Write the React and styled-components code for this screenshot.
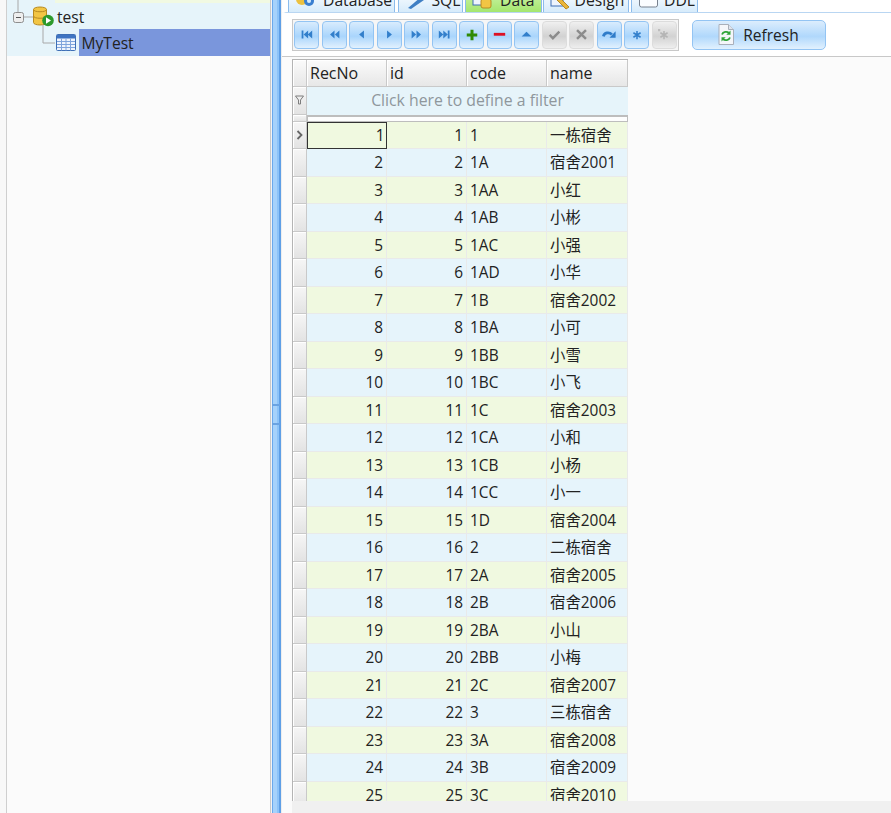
import * as React from "react";
import styled, { createGlobalStyle } from "styled-components";

const GlobalStyle = createGlobalStyle`
  html, body {
    margin: 0;
    padding: 0;
    background: #fbfbfb;
  }
  * {
    box-sizing: border-box;
  }
`;

const FONT = `"Open Sans", "Noto Sans", "Noto Sans CJK SC", sans-serif`;

const Page = styled.div`
  display: grid;
  grid-template-columns: 270px 12px 1fr;
  width: 891px;
  height: 813px;
  overflow: hidden;
  font-family: ${FONT};
  font-size: 15px;
  color: #222;
  background: #fbfbfb;
`;

/* left pane */
const LeftPane = styled.div`
  padding-left: 6px;
  background: #f8f8f8;
`;

const Tree = styled.div`
  height: 100%;
  border-left: 1.5px solid #cfcfcf;
  background: #fbfbfb;
  font-size: 15.6px;
`;

const TreeTop = styled.div`
  background: #e6f4fa;
`;

const TreeStub = styled.div`
  display: flex;
  height: 3px;
`;

const Stripe = styled.div`
  flex: 1;
  background: #f1f9e2;
`;

const TreeRow = styled.div`
  display: flex;
  align-items: center;
  height: ${p => p.$h}px;
`;

const NodeLabel = styled.span`
  margin-left: ${p => p.$ml || 0}px;
  padding-top: ${p => p.$pt || 0}px;
  line-height: 1;
`;

const Selected = styled.div`
  flex: 1;
  align-self: stretch;
  display: flex;
  align-items: center;
  margin-left: 3px;
  padding-left: 3px;
  background: #7a96dc;
`;

const Lines = styled.svg`
  flex: none;
  overflow: visible;
`;

/* splitter */
const Splitter = styled.div`
  display: flex;
  flex-direction: column;
  gap: 17px;
  padding-top: 404px;
  border-left: 1.5px solid #c9c9c9;
  border-right: 1.5px solid #ededed;
  background: linear-gradient(
    to right,
    #f4f4f4 0 1px,
    #6aa9ec 1px 2px,
    #a6d2fb 2px 6px,
    #8cc3f8 6px 8px,
    #5f9fe6 8px 9px
  );
`;

const Grip = styled.div`
  height: 2px;
  margin: 0 1px;
  background: #6aa3e2;
`;

/* right pane */
const RightPane = styled.div`
  display: flex;
  flex-direction: column;
  min-width: 0;
  height: 813px;
`;

const TabBar = styled.div`
  display: flex;
  align-items: flex-end;
  gap: 2.5px;
  flex: none;
  height: 12px;
  padding-left: 6px;
  overflow: hidden;
  background: #fff;
`;

const Tab = styled.div`
  display: flex;
  flex: none;
  align-items: center;
  gap: ${p => p.$gap}px;
  width: ${p => p.$w}px;
  height: 24px;
  margin-right: ${p => (p.$active ? -2 : 0)}px;
  padding-left: 6px;
  border: 1px solid #8cbcec;
  border-bottom: none;
  background: ${p =>
    p.$active
      ? "linear-gradient(#d2f5b0, #a4e66e)"
      : "linear-gradient(#ffffff, #d6ebfb)"};
  font-size: 15.7px;
  line-height: 1;
  white-space: nowrap;
`;

const Content = styled.div`
  flex: 1;
  display: flex;
  flex-direction: column;
  min-height: 0;
  border-top: 1px solid #b9d6f2;
  border-top-left-radius: 5px;
  background: #fbfbfb;
`;

const ToolArea = styled.div`
  display: flex;
  align-items: center;
  gap: 13px;
  flex: none;
  height: 44px;
  padding: 0 0 0 10px;
  border-bottom: 1.5px solid #c8c8c8;
  background: #fff;
`;

const Toolbar = styled.div`
  display: flex;
  gap: 2.5px;
  height: 32px;
  padding: 1px;
  border: 1.5px solid #c8c8c8;
  background: #f6f6f6;
`;

const ToolButton = styled.div`
  display: flex;
  align-items: center;
  justify-content: center;
  width: 25px;
  height: 28px;
  border-radius: 4px;
  border: 1px solid ${p => (p.$off ? "#dcdcdc" : "#93c4f3")};
  background: ${p =>
    p.$off
      ? "linear-gradient(#f0f0f0, #d2d2d2 55%, #eeeeee)"
      : "linear-gradient(#d9ecfd, #a9d5fc 55%, #e2f1fe)"};
`;

const RefreshButton = styled.div`
  display: flex;
  align-items: center;
  justify-content: center;
  gap: 9px;
  width: 134px;
  height: 30px;
  border-radius: 5px;
  border: 1px solid #93c4f3;
  background: linear-gradient(#dcedfd, #b0d8fc 55%, #e2f1fe);
  font-size: 15.5px;
`;

const GridArea = styled.div`
  flex: 1;
  min-height: 0;
  padding: 2px 0 0 10px;
  overflow: hidden;
`;

const BottomBar = styled.div`
  flex: none;
  height: 12px;
  margin-left: 10px;
  background: #f0f0f0;
`;

const Table = styled.div`
  width: 336px;
  border-left: 1.5px solid #b4b4b4;
  border-top: 1.5px solid #b4b4b4;
`;

const columns = "14px 80px 80px 80px 80.5px";

const HeadRow = styled.div`
  display: grid;
  grid-template-columns: ${columns};
  height: 26.5px;
`;

const HeadCell = styled.div`
  display: flex;
  align-items: center;
  padding-left: 3px;
  border-right: 1.5px solid #c9c9c9;
  border-bottom: 1px solid #c9c9c9;
  background: linear-gradient(#fbfbfb, #e7e7e7);
  box-shadow: inset 1px 1px 0 #fff;
  font-size: 16px;
  line-height: 1;
`;

const FilterRow = styled.div`
  display: grid;
  grid-template-columns: 14px 1fr;
  height: 28px;
`;

const FilterText = styled.div`
  display: flex;
  align-items: center;
  justify-content: center;
  background: #e6f4fa;
  color: #8f979c;
  font-size: 15.8px;
  line-height: 1;
`;

const Gutter = styled.div`
  display: flex;
  align-items: center;
  justify-content: center;
  border-right: 1px solid #c9c9c9;
  border-bottom: 1.5px solid #c9c9c9;
  background: linear-gradient(#f6f6f6, #e3e3e3);
  box-shadow: inset 1px 1px 0 #fff;
`;

const SplitRow = styled.div`
  display: grid;
  grid-template-columns: 14px 1fr;
  height: 7px;
`;

const SplitBar = styled.div`
  margin-right: 0.5px;
  border: 1px solid #bdbdbd;
  border-top-width: 2px;
  background: #fdfdfd;
`;

const Row = styled.div`
  display: grid;
  grid-template-columns: ${columns};
  height: 27.5px;
  background: ${p => (p.$odd ? "#f0f9e0" : "#e6f4fb")};
`;

const Cell = styled.div`
  display: flex;
  align-items: center;
  justify-content: ${p => (p.$right ? "flex-end" : "flex-start")};
  padding: 1px 3px 0;
  border-right: 1.5px solid #e9eaea;
  border-bottom: 1.5px solid #e9eaea;
  font-size: 15.4px;
  white-space: nowrap;
  line-height: 1;
`;

const CurrentCell = styled(Cell)`
  padding-right: 1.5px;
  border: 1.5px solid #333;
`;

const navPaths = {
  first: "M2 3h2.2v10H2zM10 3v10L4.5 8zM15 3v10L9.5 8z",
  prevPage: "M8 3v10L2.5 8zM14 3v10L8.5 8z",
  prev: "M11 3v10L5 8z",
  next: "M5 3v10l6-5z",
  nextPage: "M2 3v10l5.5-5zM8 3v10l5.5-5z",
  last: "M1 3v10l5.5-5zM6.5 3v10L12 8zM12 3h2.2v10H12z",
  up: "M8 4.5l6 6H2z"
};

const NavIcon = ({ kind }) => (
  <svg width="13" height="13" viewBox="0 0 16 16">
    <path d={navPaths[kind]} fill="#327fcb" />
  </svg>
);

const PlusIcon = () => (
  <svg width="12" height="12" viewBox="0 0 16 16">
    <path d="M6 1h4v5h5v4h-5v5H6v-5H1V6h5z" fill="#2f8a05" />
  </svg>
);

const MinusIcon = () => (
  <svg width="13" height="13" viewBox="0 0 16 16">
    <path d="M1 6h14v3.5H1z" fill="#dd1124" />
  </svg>
);

const CheckIcon = () => (
  <svg width="13" height="13" viewBox="0 0 16 16">
    <path d="M2 8.5l4 4 8-8" fill="none" stroke="#8c8c8c" strokeWidth="3" />
  </svg>
);

const CrossIcon = () => (
  <svg width="13" height="13" viewBox="0 0 16 16">
    <path d="M2.5 2.5l11 11M13.5 2.5l-11 11" fill="none" stroke="#8c8c8c" strokeWidth="3" />
  </svg>
);

const RedoIcon = () => (
  <svg width="15" height="15" viewBox="0 0 16 16">
    <path d="M1.5 10c1-4 6-5 9-2" fill="none" stroke="#2f7cc9" strokeWidth="3" />
    <path d="M14.5 4.5v7h-6.5z" fill="#2f7cc9" />
  </svg>
);

const StarIcon = ({ color = "#327fcb", faded }) => (
  <svg width="12" height="12" viewBox="0 0 16 16">
    <path
      d="M8 2.5v11M3.2 5l9.6 6M12.8 5l-9.6 6"
      fill="none"
      stroke={color}
      strokeWidth="2"
    />
    {faded && <path d="M0 0h3v3H0z" fill="#bdbdbd" />}
  </svg>
);

const RefreshIcon = () => (
  <svg width="16" height="21" viewBox="0 0 16 21">
    <path d="M1 .5h9.5l5 5v15H1z" fill="#f4f6fa" stroke="#a9afba" />
    <path d="M10.5.5v5h5" fill="#dfe4ec" stroke="#a9afba" />
    <path d="M4 10.5c1-3 5-3.5 7-1.5" fill="none" stroke="#2fa53a" strokeWidth="1.8" />
    <path d="M12.5 6.5v4.2H8.3z" fill="#2fa53a" />
    <path d="M12 13.5c-1 3-5 3.5-7 1.5" fill="none" stroke="#2fa53a" strokeWidth="1.8" />
    <path d="M3.5 17.5v-4.2h4.2z" fill="#2fa53a" />
  </svg>
);

const DbIcon = () => (
  <svg width="21" height="21" viewBox="0 0 21 21">
    <path
      d="M.5 3.5C.5 .2 13.5 .2 13.5 3.5v13c0 3.3-13 3.3-13 0z"
      fill="#f2c544"
      stroke="#b78a22"
    />
    <path d="M.5 3.5c0 3 13 3 13 0M.5 10c0 3 13 3 13 0" fill="none" stroke="#b78a22" />
    <circle cx="15" cy="14.5" r="5.8" fill="#2c9a2c" />
    <path d="M13 11.3l5 3.2-5 3.2z" fill="#fff" />
  </svg>
);

const TableIcon = () => (
  <svg width="20" height="17" viewBox="0 0 20 17">
    <rect x=".5" y=".5" width="19" height="16" rx="1" fill="#eef4fd" stroke="#3e6fb5" />
    <rect x="1" y="1" width="18" height="3.5" fill="#3f74c2" />
    <path
      d="M1 7.5h18M1 10.5h18M1 13.5h18M5.5 4.5v12M10 4.5v12M14.5 4.5v12"
      fill="none"
      stroke="#7fa4dc"
    />
  </svg>
);

const tabClips = {
  database: (
    <svg width="22" height="26" viewBox="0 0 22 26">
      <ellipse cx="7" cy="11" rx="6" ry="6" fill="#ecc13f" />
      <circle cx="14" cy="13" r="5" fill="#3a7fd0" />
      <circle cx="14" cy="13" r="2" fill="#d8ecfb" />
    </svg>
  ),
  sql: (
    <svg width="22" height="26" viewBox="0 0 22 26">
      <path d="M3 20L16 9l3 3-13 9z" fill="#3f7fc4" />
    </svg>
  ),
  data: (
    <svg width="22" height="26" viewBox="0 0 22 26">
      <rect x="1" y="6" width="12" height="11" fill="#eef4fd" stroke="#3e6fb5" />
      <rect x="9" y="11" width="10" height="9" rx="2" fill="#f2c544" stroke="#b78a22" />
    </svg>
  ),
  design: (
    <svg width="22" height="26" viewBox="0 0 22 26">
      <rect x="1" y="6" width="12" height="12" fill="#eef4fd" stroke="#3e6fb5" />
      <path d="M9 9l10 10-3 2-9-9z" fill="#eab53a" stroke="#b78a22" />
    </svg>
  ),
  ddl: (
    <svg width="22" height="26" viewBox="0 0 22 26">
      <rect x="1.5" y="4" width="18" height="15" rx="2" fill="#fbfdff" stroke="#77818e" />
    </svg>
  )
};

const tabs = [
  { label: "Database", icon: "database", w: 107, gap: 6 },
  { label: "SQL", icon: "sql", w: 65, gap: 5 },
  { label: "Data", icon: "data", w: 77, gap: 6, active: true },
  { label: "Design", icon: "design", w: 86, gap: 3 },
  { label: "DDL", icon: "ddl", w: 67, gap: 4 }
];

const tools = [
  <NavIcon kind="first" />,
  <NavIcon kind="prevPage" />,
  <NavIcon kind="prev" />,
  <NavIcon kind="next" />,
  <NavIcon kind="nextPage" />,
  <NavIcon kind="last" />,
  <PlusIcon />,
  <MinusIcon />,
  <NavIcon kind="up" />,
  <CheckIcon />,
  <CrossIcon />,
  <RedoIcon />,
  <StarIcon />,
  <StarIcon color="#b4b4b4" faded />
];

const offTools = [9, 10, 13];

const rows = [
  ["1", "一栋宿舍"],
  ["1A", "宿舍2001"],
  ["1AA", "小红"],
  ["1AB", "小彬"],
  ["1AC", "小强"],
  ["1AD", "小华"],
  ["1B", "宿舍2002"],
  ["1BA", "小可"],
  ["1BB", "小雪"],
  ["1BC", "小飞"],
  ["1C", "宿舍2003"],
  ["1CA", "小和"],
  ["1CB", "小杨"],
  ["1CC", "小一"],
  ["1D", "宿舍2004"],
  ["2", "二栋宿舍"],
  ["2A", "宿舍2005"],
  ["2B", "宿舍2006"],
  ["2BA", "小山"],
  ["2BB", "小梅"],
  ["2C", "宿舍2007"],
  ["3", "三栋宿舍"],
  ["3A", "宿舍2008"],
  ["3B", "宿舍2009"],
  ["3C", "宿舍2010"]
];

const App = () => (
  <Page>
    <GlobalStyle />
    <LeftPane>
      <Tree>
        <TreeTop>
          <TreeStub>
            <Lines width="47.5" height="3">
              <path d="M11 0v3" stroke="#a8a8a8" />
            </Lines>
            <Stripe />
          </TreeStub>
          <TreeRow $h={26}>
            <Lines width="26" height="26">
              <path d="M11 0v9M17 14h9" stroke="#a8a8a8" fill="none" />
              <rect x="6.5" y="9.5" width="10" height="10" rx="2" fill="#eeeeee" stroke="#8e8e8e" />
              <path d="M9 14.5h5" stroke="#555" />
            </Lines>
            <DbIcon />
            <NodeLabel $ml={3} $pt={4}>test</NodeLabel>
          </TreeRow>
          <TreeRow $h={27}>
            <Lines width="48.5" height="27">
              <path d="M36 -4v18h12" stroke="#a8a8a8" fill="none" />
            </Lines>
            <TableIcon />
            <Selected>
              <NodeLabel $pt={2}>MyTest</NodeLabel>
            </Selected>
          </TreeRow>
        </TreeTop>
      </Tree>
    </LeftPane>
    <Splitter>
      <Grip />
      <Grip />
    </Splitter>
    <RightPane>
      <TabBar>
        {tabs.map(tab => (
          <Tab key={tab.label} $w={tab.w} $gap={tab.gap} $active={tab.active}>
            {tabClips[tab.icon]}
            {tab.label}
          </Tab>
        ))}
      </TabBar>
      <Content>
        <ToolArea>
          <Toolbar>
            {tools.map((icon, i) => (
              <ToolButton key={i} $off={offTools.includes(i)}>
                {icon}
              </ToolButton>
            ))}
          </Toolbar>
          <RefreshButton>
            <RefreshIcon />
            Refresh
          </RefreshButton>
        </ToolArea>
        <GridArea>
          <Table>
            <HeadRow>
              <HeadCell />
              <HeadCell>RecNo</HeadCell>
              <HeadCell>id</HeadCell>
              <HeadCell>code</HeadCell>
              <HeadCell>name</HeadCell>
            </HeadRow>
            <FilterRow>
              <Gutter>
                <svg width="9" height="10" viewBox="0 0 9 10">
                  <path d="M.5 1h8L5.5 5v4h-2V5z" fill="none" stroke="#7d7d7d" />
                </svg>
              </Gutter>
              <FilterText>Click here to define a filter</FilterText>
            </FilterRow>
            <SplitRow>
              <Gutter />
              <SplitBar />
            </SplitRow>
            {rows.map(([code, name], i) => {
              const RecCell = i === 0 ? CurrentCell : Cell;
              return (
                <Row key={code} $odd={i % 2 === 0}>
                  <Gutter>
                    {i === 0 && (
                      <svg width="8" height="10" viewBox="0 0 8 10">
                        <path d="M1.5 1l4 4-4 4" fill="none" stroke="#666" strokeWidth="1.8" />
                      </svg>
                    )}
                  </Gutter>
                  <RecCell $right>{i + 1}</RecCell>
                  <Cell $right>{i + 1}</Cell>
                  <Cell>{code}</Cell>
                  <Cell>{name}</Cell>
                </Row>
              );
            })}
          </Table>
        </GridArea>
        <BottomBar />
      </Content>
    </RightPane>
  </Page>
);

export default App;
